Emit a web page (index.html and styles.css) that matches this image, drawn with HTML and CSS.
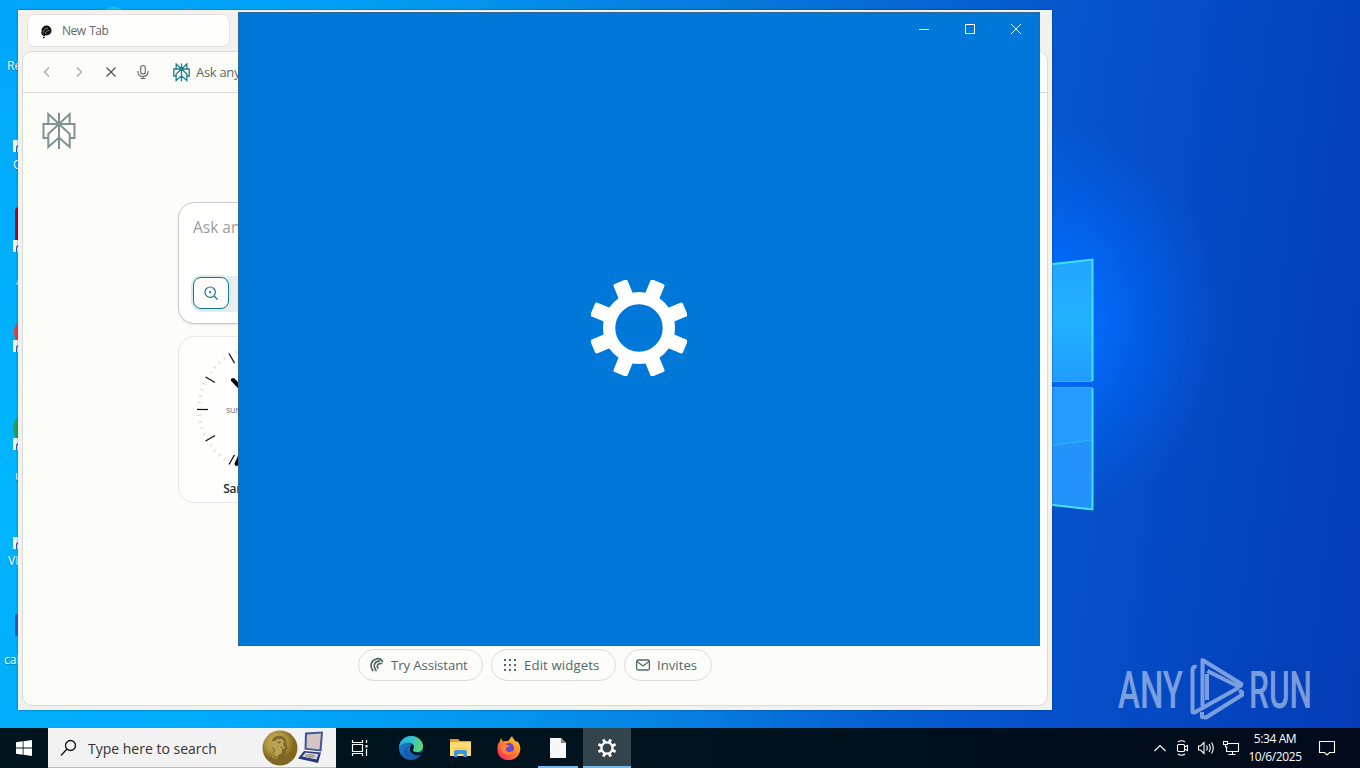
FILE: index.html
```html
<!DOCTYPE html>
<html lang="en">
<head>
    <meta charset="UTF-8">
    <meta name="viewport" content="width=device-width, initial-scale=1.0">
    <title>Desktop</title>
    <link rel="stylesheet" href="styles.css">
</head>
<body>
    <svg width="0" height="0" class="defs">
        <symbol id="perplexity" viewBox="0 0 34 38">
            <path d="M17 1v36M6.300 12V2L17 12 27.700 2v10M6.300 26H1.500V12h31v14h-4.800M17 12 6.300 22v13L17 25.500 27.700 35V22z" fill="none" stroke="currentColor"/>
        </symbol>
        <symbol id="gear" viewBox="0 0 98 98">
            <g fill="currentColor">
                <g id="teeth">
                    <rect x="41.300" y="-2" width="15.400" height="20" rx="2" transform="rotate(22.500 49 49)"/>
                    <rect x="41.300" y="-2" width="15.400" height="20" rx="2" transform="rotate(67.500 49 49)"/>
                    <rect x="41.300" y="-2" width="15.400" height="20" rx="2" transform="rotate(112.500 49 49)"/>
                    <rect x="41.300" y="-2" width="15.400" height="20" rx="2" transform="rotate(157.500 49 49)"/>
                </g>
                <use href="#teeth" transform="rotate(180 49 49)"/>
            </g>
            <circle cx="49" cy="49" r="30.500" fill="none" stroke="currentColor" stroke-width="12.600"/>
        </symbol>
        <symbol id="assistant" viewBox="0 0 16 16">
            <path d="M3.800 13.500C.5 8.500 2 3.500 7.500 2M7 13.500C3.500 8.500 5.500 4.500 10.500 3.800M8.800 11C7.500 8.500 9 6.200 12.500 6.500M7.500 1.800c3-.6 5 .6 6 2.800" fill="none" stroke="currentColor" stroke-width="1.700" stroke-linecap="round"/>
        </symbol>
    </svg>

    <main class="desktop">
        <svg class="wallpaper" viewBox="0 0 1360 728" preserveAspectRatio="none">
            <defs>
                <linearGradient id="pane" x1="0" y1="0" x2="0" y2="1">
                    <stop offset="0" stop-color="#22a5ff"/>
                    <stop offset=".5" stop-color="#22b2ff"/>
                    <stop offset="1" stop-color="#209cff"/>
                </linearGradient>
            </defs>
            <path d="M1040 265.500 1092 259v122h-52z" fill="url(#pane)"/>
            <path d="M1040 387h52v123l-52-6z" fill="#239bff"/>
            <path d="M1040 447l52-7v70l-52-6z" fill="#2492fb"/>
            <path d="M1040 447l52-7" stroke="#35b5ff" fill="none"/>
            <path d="M1040 381.500h52M1040 387.500h52" stroke="#35b0ff" fill="none"/>
            <path d="M1040 265.500 1092.500 259.500V381M1092.500 388v121.500l-52.500-6" stroke="#43e2ff" stroke-width="2" fill="none"/>
        </svg>

        <div class="shortcut recycle">Recycle Bin</div>
        <div class="shortcut chrome"><i class="badge"></i></div>
        <div class="shortcut opera">O</div>
        <div class="shortcut acrobat"><i class="thumb"></i><i class="badge"></i></div>
        <div class="shortcut letter">A</div>
        <div class="shortcut ccleaner"><i class="thumb"></i><i class="badge"></i></div>
        <div class="shortcut green"><i class="thumb"></i><i class="badge"></i></div>
        <div class="shortcut util">u</div>
        <div class="shortcut vlc"><i class="badge"></i>VLC</div>
        <div class="shortcut cal"><i class="thumb"></i>calls</div>
        <i class="peek teal"></i>
        <i class="peek gray"></i>

        <section class="browser">
            <div class="tab">
                <svg width="16" height="16" viewBox="0 0 16 16">
                    <circle cx="8.500" cy="7.500" r="5" fill="#111"/>
                    <path d="M5 10.500C5 7 7 5.500 10 5M7.500 11c0-2.500 1.500-3.500 4-3.500" fill="none" stroke="#999" stroke-width=".8"/>
                    <path d="M4 9c0 2 1 3 3 3.500M5 14.500h1.500" fill="none" stroke="#111" stroke-width="1.600"/>
                </svg>
                <span>New Tab</span>
            </div>
            <div class="page">
                <div class="toolbar">
                    <svg class="nav off" viewBox="0 0 16 16"><path d="M10 3.500 5.500 8l4.500 4.500"/></svg>
                    <svg class="nav off" viewBox="0 0 16 16"><path d="M6 3.500 10.500 8 6 12.500"/></svg>
                    <svg class="nav" viewBox="0 0 16 16"><path d="M3.500 3.500l9 9M12.500 3.500l-9 9"/></svg>
                    <svg class="nav mic" viewBox="0 0 16 16"><rect x="5.700" y="1.500" width="4.600" height="8.500" rx="2.300"/><path d="M3 7v1c0 2.700 2 4.500 5 4.500s5-1.800 5-4.500V7M8 12.500v2M5.500 14.500h5"/></svg>
                    <svg class="brand"><use href="#perplexity"/></svg>
                    <span class="address">Ask anything</span>
                </div>
                <div class="content">
                    <svg class="logo"><use href="#perplexity"/></svg>
                    <div class="home">
                        <div class="ask">
                            <p>Ask anything</p>
                            <div class="modes">
                                <span class="mode">
                                    <svg width="16" height="16" viewBox="0 0 16 16" fill="none" stroke="#20758a" stroke-width="1.200"><circle cx="7.200" cy="7.200" r="5.200"/><path d="M11 11l3.500 3.500"/><circle cx="7.200" cy="7.200" r=".5"/></svg>
                                </span>
                            </div>
                        </div>
                        <div class="clock">
                            <svg width="130" height="130" viewBox="-65 -65 130 130">
                                <circle r="62" fill="none" stroke="#d3d5d2" stroke-width="3.500" pathLength="360" stroke-dasharray=".8 5.200" stroke-dashoffset=".4"/>
                                <g stroke="#111" stroke-width="1.200">
                                    <path d="M-64 .5h11"/>
                                    <path d="M-64 0h11" transform="rotate(30)"/>
                                    <path d="M-64 0h11" transform="rotate(60)"/>
                                    <path d="M-64 0h11" transform="rotate(-30)"/>
                                    <path d="M-64 0h11" transform="rotate(-60)"/>
                                </g>
                                <text x="-35" y="4" class="day">SUN</text>
                                <path d="M0 0-28-29" stroke="#000" stroke-width="4" stroke-linecap="round"/>
                                <path d="M0 0-24.400 54.800" stroke="#000" stroke-width="4" stroke-linecap="round"/>
                            </svg>
                            <b>San Francisco</b>
                        </div>
                    </div>
                    <div class="chips">
                        <span class="chip"><svg width="16" height="16"><use href="#assistant"/></svg>Try Assistant</span>
                        <span class="chip edit">
                            <svg width="16" height="16" viewBox="0 0 16 16"><path d="M2 3h12M2 8h12M2 13h12" stroke="currentColor" stroke-width="2" stroke-dasharray="2 3"/></svg>Edit widgets</span>
                        <span class="chip invites">
                            <svg width="16" height="16" viewBox="0 0 16 16" fill="none" stroke="currentColor" stroke-width="1.300"><rect x="1.600" y="3" width="12.800" height="10" rx="1.500"/><path d="M2 4.500l6 4.500 6-4.500"/></svg>Invites</span>
                    </div>
                </div>
            </div>
        </section>

        <section class="settings">
            <div class="caption">
                <svg viewBox="0 0 46 34"><path d="M18 17.500h10"/></svg>
                <svg viewBox="0 0 46 34"><rect x="18.500" y="12.500" width="9" height="9"/></svg>
                <svg viewBox="0 0 46 34"><path d="M18 12l10 10M28 12 18 22"/></svg>
            </div>
            <div class="splash"><svg width="96" height="96"><use href="#gear"/></svg></div>
        </section>

        <svg class="anyrun" width="210" height="70" viewBox="1115 655 210 70">
            <text x="1118" y="708" textLength="65" lengthAdjust="spacingAndGlyphs">ANY</text>
            <text x="1249" y="708" textLength="63" lengthAdjust="spacingAndGlyphs">RUN</text>
            <g fill="none" stroke-width="4" stroke-linejoin="round">
                <path d="M1196.500 667c-3-1-4 1-4 3v42l2 .5 44.500-25"/>
                <path d="M1202.500 706v-46l39 24-1 2h-3l-30-15"/>
                <path d="M1202 712v5l4 .5 36-22.500v-3l-3-1"/>
                <path d="M1207 674v26"/>
            </g>
        </svg>
    </main>

    <footer class="taskbar">
        <div class="start">
            <svg width="16" height="16" viewBox="0 0 16 16" fill="#fff"><path d="M0 2.300 6.700 1.300v6.300H0zM7.500 1.200 16 0v7.600H7.500zM0 8.400h6.700v6.300L0 13.700zM7.500 8.400H16V16l-8.500-1.200z"/></svg>
        </div>
        <div class="search">
            <svg width="18" height="18" viewBox="0 0 18 18" fill="none" stroke="#111" stroke-width="1.300"><circle cx="10.500" cy="6.500" r="5"/><path d="M7 10 1 16.500"/></svg>
            <span>Type here to search</span>
            <svg class="medal" width="66" height="38" viewBox="0 0 66 38">
                <defs>
                    <radialGradient id="gold" cx=".4" cy=".35"><stop offset="0" stop-color="#d2bd6a"/><stop offset=".6" stop-color="#ad943d"/><stop offset="1" stop-color="#80681f"/></radialGradient>
                </defs>
                <circle cx="19" cy="19" r="17.500" fill="url(#gold)"/>
                <path d="M11 11c3-6 12-5 14 0 1 3 0 4 1 6l1 3-2 1v4l-3 1c3 2 6 3 7 5-6 5-16 5-21 0 1-3 3-3 4-5l1-5c-3-2-4-7-2-10z" fill="#7d682a"/>
                <path d="M14 12c2-3 7-3 9 0l-1 3 2 4-3 1 0 4-4 2-1 4-5-1c2-4 3-6 3-9-4-2-5-5-4-8z" fill="#b9a352"/>
                <path d="M15 13l5-1-1 3zM20 17l2 2-3 0zM13 26l4 2-5 3z" fill="#8a742d"/>
                <path d="M44 3.500l18-1-1.500 20-17-2z" fill="#40579b"/>
                <path d="M46 5.500l14-1-1.500 16-13-1.500z" fill="#d4c6c0"/>
                <path d="M43 22l17 1.500L57 34l-20-4.500z" fill="#27387c"/>
                <path d="M44.500 23.500l13 1.500-2 5.500-14.500-3z" fill="#d1d2dc"/>
                <ellipse cx="49" cy="27" rx="5" ry="2" fill="#b0a69c"/>
            </svg>
        </div>
        <div class="apps">
            <div class="app">
                <svg width="18" height="18" viewBox="0 0 18 18" fill="none" stroke="#fff" stroke-width="1.200"><path d="M1.500 1v2.500h10V1M1.500 17v-2.500h10V17M1.500 5.500h10v7h-10zM15.500 1v3M15.500 10v7"/><path d="M14.500 6h2v2.500h-2z" fill="#fff" stroke="none"/></svg>
            </div>
            <div class="app edge">
                <svg width="26" height="26" viewBox="0 0 26 26">
                    <defs>
                        <linearGradient id="edgeTop" x1="0" y1=".3" x2="1" y2=".5"><stop offset="0" stop-color="#28a8e5"/><stop offset=".5" stop-color="#2fc5cb"/><stop offset="1" stop-color="#66d865"/></linearGradient>
                        <linearGradient id="edgeLow" x1="0" y1="0" x2="1" y2="1"><stop offset="0" stop-color="#1c86db"/><stop offset="1" stop-color="#124b99"/></linearGradient>
                    </defs>
                    <circle cx="13" cy="13" r="12" fill="url(#edgeLow)"/>
                    <path d="M1 12C2 5 7 1 13 1c7 0 12 5 12 10 0 4-3 6-6 6-3 0-4-1-4-2s1-1.500 1-3.500c0-2-2-4-5-4-4 0-8 1.500-10 4.500z" fill="url(#edgeTop)"/>
                    <path d="M11 11c-3 4-.5 9 4 10.500 3 1 6 0 8-2.500-4 6-11 7-15 3-4-4-2-10 3-11z" fill="#1260b2"/>
                    <path d="M14 9c2 1.500 2.300 3.500 1 5.500-.7 1.500.8 2.500 3 3h7l-2 2c-5 2-11-1-11-5 0-2 .5-4 2-5.500z" fill="#00131b"/>
                </svg>
            </div>
            <div class="app">
                <svg width="24" height="22" viewBox="0 0 24 22"><path d="M2 2h8l2 2h11v15H2z" fill="#dda020"/><path d="M2 5h21v14H2z" fill="#ffdb72"/><path d="M6 20v-6l2-1h9l2 1v6h-3.500v-3h-6v3z" fill="#3f95d8"/><path d="M6 11.500h13" stroke="#efc14a"/></svg>
            </div>
            <div class="app">
                <svg width="24" height="24" viewBox="0 0 24 24">
                    <defs><linearGradient id="fox" x1="1" y1="0" x2=".2" y2="1"><stop offset="0" stop-color="#ffe13d"/><stop offset=".45" stop-color="#ff9027"/><stop offset="1" stop-color="#f92c62"/></linearGradient></defs>
                    <path d="M3 5l1-3 2 3.500L9 5l2 0 1-1 3-4c1 3 3 4 4 6l1-1c4 4 4 9 2 13-2 4-6 6-10 6C4 24 0 19 .5 12 .8 8 1.500 7 3 5z" fill="url(#fox)"/>
                    <circle cx="12" cy="12" r="5" fill="#6746d1"/>
                    <path d="M4 8c3-2 5-1 6 1l3 .5-3 2c-2 1-1 4 1 4.500 2 .5 4-1 5-1-1 3-4 4-7 3C5 17 3 13 4 8z" fill="#ff812c"/>
                </svg>
            </div>
            <div class="app running">
                <svg width="16" height="22" viewBox="0 0 16 22"><path d="M0 1h11l5 5v15H0z" fill="#f7f7f7"/><path d="M11 1v5h5z" fill="#888"/></svg>
            </div>
            <div class="app active"><svg width="18" height="18"><use href="#gear"/></svg></div>
        </div>
        <div class="tray">
            <svg width="14" height="16" viewBox="0 0 14 16"><path d="M1.500 11 7 5.500l5.500 5.500"/></svg>
            <svg width="16" height="16" viewBox="0 0 16 16"><rect x="3.500" y="4.500" width="7" height="7" rx="1"/><path d="M10.500 7l3-1.500v5l-3-1.500M4 2q3.500-2.500 7 0M4 14q3.500 2.500 7 0"/></svg>
            <svg width="18" height="16" viewBox="0 0 18 16"><path d="M1.500 6v4h2l3.500 3.500v-11L3.500 6zM9.500 5.500q1.500 2.500 0 5M12 4q2.500 4 0 8M14.500 2.500q3.500 5.500 0 11"/></svg>
            <svg width="18" height="16" viewBox="0 0 18 16"><path d="M6 3.500h10.500v8H4.500V7M10.500 11.500v3M6.500 14.500h7M1.500 1.500h4v3h-4zM3.500 4.500V7h2"/></svg>
            <div class="time"><span>5:34 AM</span><span>10/6/2025</span></div>
            <svg class="notify" width="18" height="18" viewBox="0 0 18 18"><path d="M1.500 2.500h15v11h-5L9 16l-2.500-2.500h-5z"/></svg>
        </div>
    </footer>
</body>
</html>
```

FILE: styles.css
```css
:root {
    --accent: #0078d9;
    --paper: #fcfdf9;
    --line: #d5dcda;
}

* {
    margin: 0;
    padding: 0;
    box-sizing: border-box;
}

body {
    width: 1360px;
    height: 768px;
    overflow: hidden;
    display: flex;
    flex-direction: column;
    font-family: 'Open Sans', 'Noto Sans', sans-serif;
    font-size: 12px;
}

svg {
    display: block;
    flex: none;
}

.defs {
    position: absolute;
}

/* Desktop */
.desktop {
    position: relative;
    height: 728px;
    overflow: hidden;
    background:
        radial-gradient(ellipse 170px 200px at 1050px 320px, #006cff 20%, rgba(0, 108, 255, .55) 50%, rgba(0, 108, 255, 0) 100%),
        radial-gradient(ellipse 900px 700px at 0 480px, rgba(0, 184, 255, .9), rgba(0, 184, 255, 0)),
        linear-gradient(97deg, #00a0fa 0%, #009cf5 20%, #0777dc 52%, #0550ca 78%, #043cb6 100%);
}

.wallpaper {
    width: 1360px;
    height: 728px;
}

.shortcut {
    position: absolute;
    left: 0;
    width: 75px;
    color: #fff;
    line-height: 16px;
    text-shadow: 0 1px 1px rgba(0, 0, 0, .3);
    white-space: nowrap;
}

.recycle { top: 58px; padding-left: 7px; }
.chrome { top: 139px; }
.opera { top: 157px; padding-left: 13px; }
.acrobat { top: 207px; }
.letter { top: 273px; padding-left: 16px; }
.ccleaner { top: 320px; }
.green { top: 411px; }
.util { top: 468px; padding-left: 15px; }
.vlc { top: 537px; padding: 16px 0 0 8px; }
.cal { top: 614px; padding: 38px 0 0 4px; }

.badge {
    position: absolute;
    left: 13px;
    top: 0;
    width: 12px;
    height: 12px;
    background: #f2f5f8;
}

.badge::after {
    content: '';
    position: absolute;
    left: 3px;
    top: 5px;
    width: 6px;
    height: 5px;
    border: 1px solid #315a9c;
    border-width: 2px 0 0 1px;
    border-radius: 3px 0 0 0;
}

.chrome .badge { top: 1px; }
.acrobat .badge { top: 33px; }
.ccleaner .badge { top: 20px; }
.green .badge { top: 27px; }

.thumb {
    position: absolute;
    left: 15px;
    top: 0;
    width: 40px;
    height: 35px;
    border-radius: 4px;
    background: #a80b12;
}

.ccleaner .thumb {
    left: 14px;
    top: -5px;
    border-radius: 50%;
    background: #e43f42;
}

.green .thumb {
    left: 13px;
    border-radius: 50%;
    background: #28a154;
}

.cal .thumb {
    height: 22px;
    border-radius: 0;
    background: #235eae;
}

.peek {
    position: absolute;
    top: 7px;
    left: 100px;
    width: 27px;
    height: 20px;
    border-radius: 50%;
    background: #16c6e6;
}

.peek.gray {
    top: 8px;
    left: 176px;
    background: #3d9bd0;
}

/* Browser window */
.browser {
    position: absolute;
    left: 18px;
    top: 10px;
    width: 1034px;
    height: 700px;
    padding: 4px 4px 4px;
    background: #f3f1ed;
    box-shadow: 0 0 2px rgba(0, 40, 80, .6);
}

.tab {
    display: flex;
    align-items: center;
    gap: 8px;
    width: 203px;
    height: 33px;
    margin: 0 0 4px 5px;
    padding: 0 10px;
    border: 1px solid #e2e1dd;
    border-radius: 8px;
    background: #fefefc;
    color: #666;
    font-size: 12px;
    letter-spacing: -.5px;
    word-spacing: 1px;
}

.page {
    height: 655px;
    border: 1px solid var(--line);
    border-radius: 10px;
    background: var(--paper);
    overflow: hidden;
}

.toolbar {
    display: flex;
    align-items: center;
    gap: 16px;
    height: 41px;
    padding-left: 16px;
    border-bottom: 1px solid #d8dad7;
}

.nav {
    width: 16px;
    height: 16px;
    fill: none;
    stroke: #555;
    stroke-width: 1.3;
}

.nav.off {
    stroke: #aaa;
}

.nav.mic {
    stroke: #666;
    stroke-width: 1.1;
}

.brand {
    width: 17px;
    height: 19px;
    margin-left: 6px;
    color: #20808d;
    stroke-width: 2.6;
}

.address {
    margin-left: -10px;
    color: #666;
    font-size: 13px;
    letter-spacing: -.3px;
}

.content {
    height: 612px;
    padding: 19px 0 0 19px;
    display: flex;
    flex-direction: column;
}

.logo {
    width: 34px;
    height: 38px;
    color: #7f9294;
    stroke-width: 2;
}

.home {
    margin: 52px 0 0 136px;
    width: 660px;
}

.ask {
    height: 122px;
    padding: 13px 14px;
    border: 1px solid #c7cccb;
    border-radius: 16px;
    background: #fffffd;
    box-shadow: 0 1px 2px rgba(0, 0, 0, .1);
    color: #979e9e;
    font-size: 15.5px;
}

.ask p {
    line-height: 23px;
}

.modes {
    width: 120px;
    margin-top: 37px;
    height: 36px;
    border-radius: 8px;
    background: #e8eeec;
}

.mode {
    display: flex;
    align-items: center;
    justify-content: center;
    width: 36px;
    height: 32px;
    border: 1px solid #20758a;
    border-radius: 8px;
    background: #fcfdfb;
    box-shadow: 0 0 0 2px #d6edef;
    transform: translateY(1px);
}

.clock {
    display: flex;
    flex-direction: column;
    align-items: center;
    width: 167px;
    height: 167px;
    margin-top: 12px;
    padding: 7px 2px 0 0;
    border: 1px solid #e8e9e6;
    border-radius: 16px;
    background: #fefefc;
    color: #13343b;
    font-size: 12px;
}

.clock b {
    margin-top: 6px;
    font-weight: 600;
    line-height: 17px;
    letter-spacing: -.35px;
}

.day {
    fill: #526568;
    font-size: 7.5px;
}

.chips {
    display: flex;
    gap: 8px;
    margin-top: auto;
    padding: 0 0 24px 316px;
}

.chip {
    display: flex;
    align-items: center;
    gap: 6px;
    width: 125px;
    height: 32px;
    padding-left: 10px;
    border: 1px solid #d8dddb;
    border-radius: 16px;
    color: #50686b;
    font-size: 13.2px;
    white-space: nowrap;
}

.chip:first-child {
    letter-spacing: -.1px;
}

.chip.edit {
    letter-spacing: .12px;
}

.chip.invites {
    width: 88px;
}

/* Settings window */
.settings {
    position: absolute;
    left: 238px;
    top: 12px;
    width: 802px;
    height: 634px;
    border: 1px solid #2f6698;
    background: var(--accent);
    color: #fff;
    display: flex;
    flex-direction: column;
}

.caption {
    display: flex;
    justify-content: flex-end;
    height: 32px;
}

.caption svg {
    width: 46px;
    height: 34px;
    margin-top: -1px;
    fill: none;
    stroke: #fff;
    stroke-width: 1;
}

.splash {
    flex: 1;
    display: flex;
    justify-content: center;
    padding-top: 235px;
}

.splash svg {
    overflow: visible;
}

.anyrun {
    position: absolute;
    left: 1115px;
    top: 655px;
    opacity: .55;
    fill: #dce6f8;
    stroke: #dce6f8;
    stroke-width: 0;
    font: 500 52px Roboto, sans-serif;
}

/* Taskbar */
.taskbar {
    display: flex;
    height: 40px;
    background: linear-gradient(90deg, #00151e, #00131e 50%, #020a1b);
    color: #fff;
}

.start {
    width: 48px;
    display: flex;
    align-items: center;
    justify-content: center;
}

.search {
    display: flex;
    align-items: center;
    gap: 10px;
    width: 288px;
    padding: 1px 9px 0 12px;
    background: #f2f2f2;
    border-bottom: 1px solid #bbb;
    color: #333;
    font-size: 14px;
}

.medal {
    margin-left: auto;
}

.apps {
    display: flex;
}

.app {
    display: flex;
    align-items: center;
    justify-content: center;
    width: 49px;
    padding-top: 2px;
    border-bottom: 2px solid transparent;
}

.app:first-child {
    padding-right: 2px;
}

.app.edge {
    padding-left: 2px;
}

.app:nth-child(3),
.app:nth-child(4) {
    padding-left: 2px;
}

.app.running {
    width: 40px;
    margin: 0 5px 0 6px;
    border-color: #76b9ed;
}

.app.active {
    width: 48px;
    background: #33444d;
    border-color: #76b9ed;
}

.tray {
    display: flex;
    align-items: center;
    gap: 7px;
    margin-left: auto;
    padding-right: 24px;
}

.tray svg {
    fill: none;
    stroke: #fff;
    stroke-width: 1.1;
}

.time {
    display: flex;
    flex-direction: column;
    align-items: center;
    width: 56px;
    font-size: 12px;
    line-height: 18px;
    letter-spacing: -.4px;
    white-space: nowrap;
}

.notify {
    margin-left: 8px;
}
```
